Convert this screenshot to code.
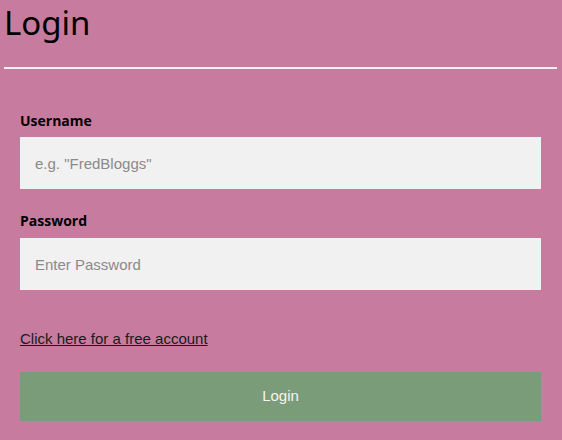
export default function App() {
  return (
    <div className="w-[562px] h-[440px] bg-[#c77c9f] pl-[4px] pr-[5px] overflow-hidden">
      <h1 className="h-[48px] text-[33px] leading-[46px] font-normal text-black font-['Noto_Sans',sans-serif]">
        Login
      </h1>
      <div className="mt-[19px] h-[2px] bg-[#f1f1f1]" />

      <form className="px-[16px] pt-[42px]" onSubmit={(e) => e.preventDefault()}>
        <label className="block h-[20px] leading-[20px] text-[14px] font-bold text-black font-['Open_Sans',sans-serif]">
          Username
        </label>
        <input
          type="text"
          placeholder='e.g. "FredBloggs"'
          className="mt-[6px] block w-full h-[52px] px-[15px] bg-[#f1f1f1] text-[15px] text-black placeholder:text-[#8a8a8a] outline-none font-['Liberation_Sans',Arial,sans-serif]"
        />

        <label className="mt-[22px] block h-[20px] leading-[20px] text-[14px] font-bold text-black font-['Open_Sans',sans-serif]">
          Password
        </label>
        <input
          type="password"
          placeholder="Enter Password"
          className="mt-[7px] block w-full h-[52px] px-[15px] bg-[#f1f1f1] text-[15px] text-black placeholder:text-[#8a8a8a] outline-none font-['Liberation_Sans',Arial,sans-serif]"
        />

        <div className="mt-[38px] h-[20px] leading-[20px]">
          <a href="#" className="text-[15px] text-[#1a1a1a] underline font-['Liberation_Sans',Arial,sans-serif]">
            Click here for a free account
          </a>
        </div>

        <button
          type="submit"
          className="mt-[24px] block w-full h-[49px] bg-[#7a9c78] text-[#f4f4f4] text-[15px] font-['Liberation_Sans',Arial,sans-serif]"
        >
          Login
        </button>
      </form>
    </div>
  );
}
